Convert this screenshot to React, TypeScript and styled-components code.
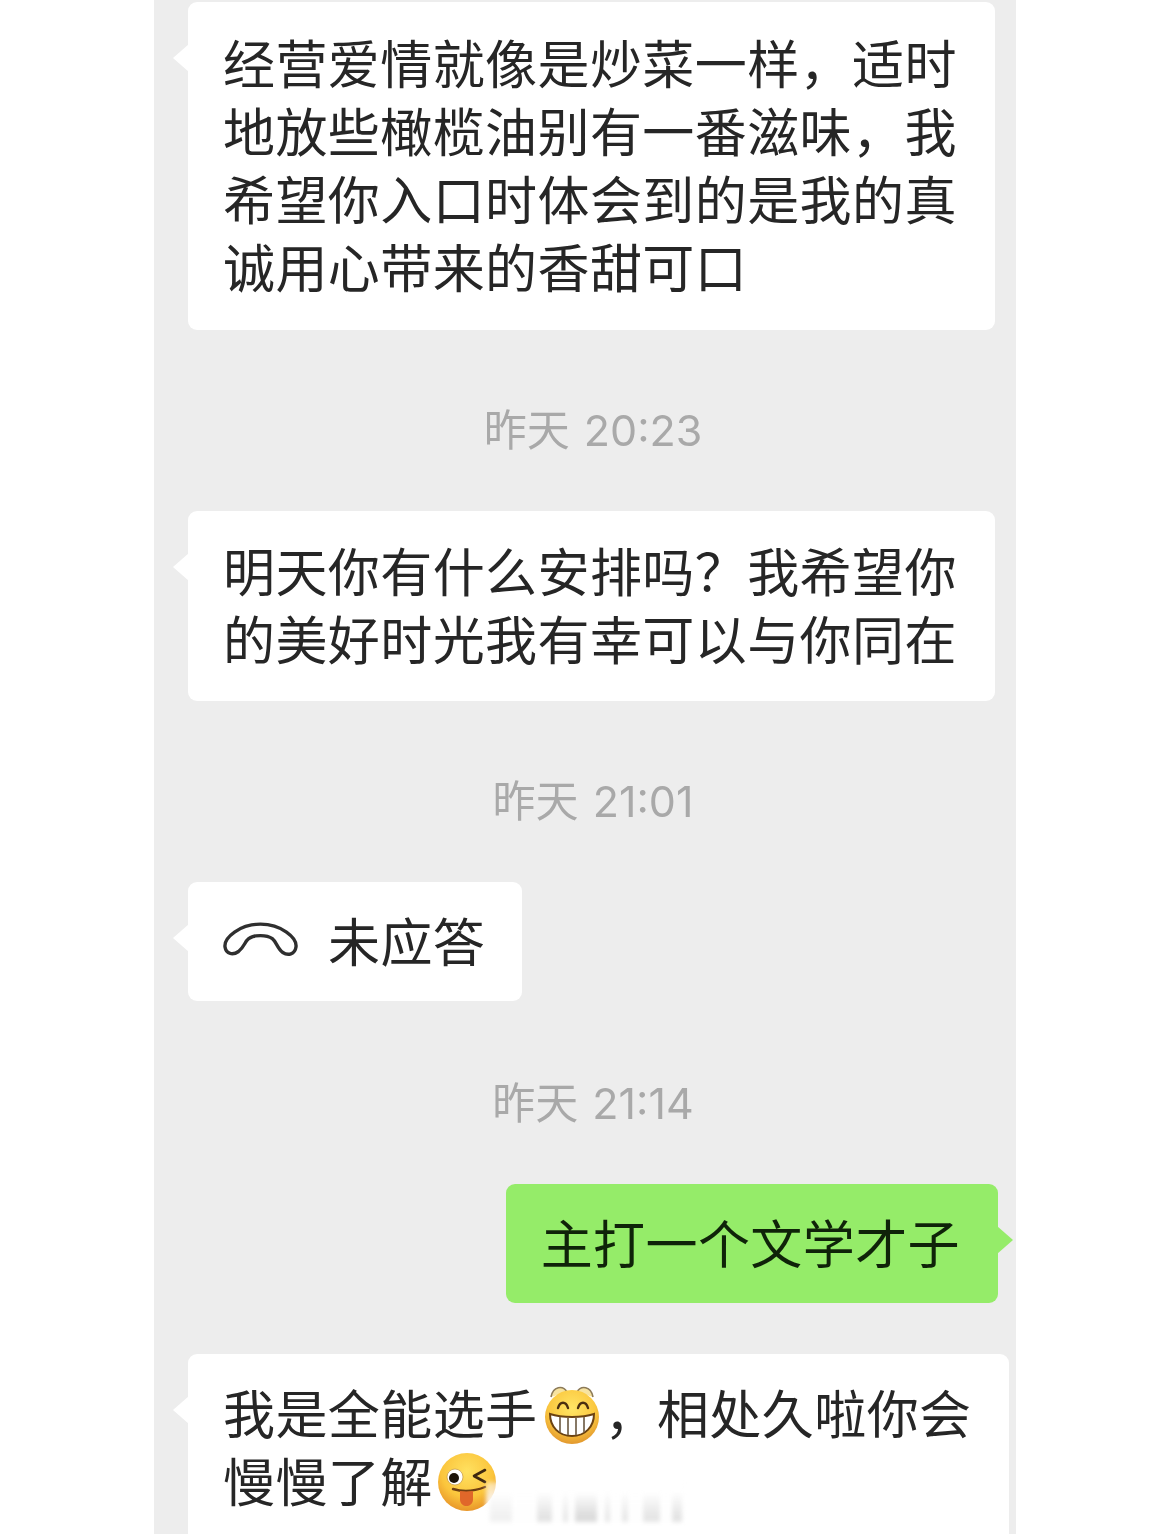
import React from "react"
import styled, { createGlobalStyle } from "styled-components"

const Global = createGlobalStyle`
  html, body {
    margin: 0;
    padding: 0;
    background: #ffffff;
  }
`

const Page = styled.main`
  width: 1170px;
  height: 1534px;
  overflow: hidden;
  background: #ffffff;
  font-family: "Noto Sans CJK SC", sans-serif;
`

const Chat = styled.div`
  position: relative;
  width: 862px;
  height: 1534px;
  margin-left: 154px;
  padding: 2px 18px 0 34px;
  box-sizing: border-box;
  background: #ededed;
  display: flex;
  flex-direction: column;
  align-items: flex-start;
  filter: blur(0.5px);
`

const Bubble = styled.div<{ $mine?: boolean; $top?: number; $bottom?: number; $right?: number }>`
  position: relative;
  flex-shrink: 0;
  align-self: ${(p) => (p.$mine ? "flex-end" : "flex-start")};
  padding: ${(p) => p.$top ?? 25}px ${(p) => p.$right ?? 38}px ${(p) => p.$bottom ?? 29}px 35px;
  border-radius: 9px;
  background: ${(p) => (p.$mine ? "#95ec69" : "#ffffff")};
  color: ${(p) => (p.$mine ? "#0f2309" : "#262626")};
  font-size: 52px;
  letter-spacing: 0.42px;
  line-height: 68px;
  white-space: nowrap;

  &::before {
    content: "";
    position: absolute;
    top: 42px;
    ${(p) => (p.$mine ? "right: -15px;" : "left: -15px;")}
    width: 16px;
    height: 28px;
    background: inherit;
    clip-path: ${(p) =>
      p.$mine ? "polygon(0 0, 100% 50%, 0 100%)" : "polygon(100% 0, 0 50%, 100% 100%)"};
  }
`

const Time = styled.div<{ $top?: number }>`
  align-self: center;
  margin: ${(p) => p.$top ?? 75}px 0 56px;
  color: #a9a9a9;
  font-family: Inter, "Noto Sans CJK SC", sans-serif;
  font-size: 43px;
  word-spacing: 2px;
  line-height: 50px;
  white-space: nowrap;
`

const CallRow = styled.div`
  display: flex;
  align-items: center;
  gap: 30px;
`

const LastBubble = styled(Bubble)`
  margin-top: 51px;
`

const InlineEmoji = styled.svg`
  display: inline-block;
  width: 60px;
  height: 60px;
  margin: 0 3px 0 4px;
  vertical-align: -10px;
`

const Watermark = styled.div`
  position: absolute;
  left: 332px;
  top: 1482px;
  width: 200px;
  height: 40px;
  display: flex;
  background: linear-gradient(180deg, rgba(255, 255, 255, 0.5), rgba(255, 255, 255, 0.92) 50%, #ffffff);
  filter: blur(2px);
`

const WatermarkBar = styled.span<{ $w: number; $gap: number; $shade: string }>`
  width: ${(p) => p.$w}px;
  margin-left: ${(p) => p.$gap}px;
  margin-top: 10px;
  background: linear-gradient(180deg, rgba(255, 255, 255, 0) 0%, ${(p) => p.$shade} 80%);
`

const watermarkBars = [
  { w: 22, gap: 4, shade: "#f1f1f1" },
  { w: 15, gap: 25, shade: "#e4e4e4" },
  { w: 5, gap: 11, shade: "#e8e8e8" },
  { w: 22, gap: 7, shade: "#dcdcdc" },
  { w: 5, gap: 8, shade: "#e8e8e8" },
  { w: 6, gap: 12, shade: "#e8e8e8" },
  { w: 17, gap: 15, shade: "#e6e6e6" },
  { w: 10, gap: 12, shade: "#e4e4e4" },
]

function PhoneIcon() {
  return (
    <svg width="75" height="36" viewBox="0 0 222 106" fill="none">
      <path
        d="M6 74C2 46 50 6 111 6C172 6 220 46 216 74C213 96 192 100 177 90C161 79 158 58 146 49C130 37 92 37 76 49C64 58 63 74 46 87C30 98 9 96 6 74Z"
        stroke="#2f2f2f"
        strokeWidth="10"
        strokeLinejoin="round"
      />
    </svg>
  )
}

function GrinEmoji() {
  return (
    <InlineEmoji viewBox="0 0 60 60">
      <defs>
        <radialGradient id="grinFace" cx="50%" cy="34%" r="66%">
          <stop offset="0%" stopColor="#ffe565" />
          <stop offset="65%" stopColor="#fbc840" />
          <stop offset="100%" stopColor="#e2982e" />
        </radialGradient>
      </defs>
      <path d="M9 13C11 2 21 1 25 8" fill="#f7e3a0" stroke="#8c7a58" strokeWidth="1.6" />
      <path d="M51 13C49 2 39 1 35 8" fill="#f7e3a0" stroke="#8c7a58" strokeWidth="1.6" />
      <circle cx="30" cy="33" r="27" fill="url(#grinFace)" />
      <path d="M16 24C18 17 24 17 26 24" fill="none" stroke="#4b2f10" strokeWidth="2.4" strokeLinecap="round" />
      <path d="M36 24C38 17 44 17 46 24" fill="none" stroke="#4b2f10" strokeWidth="2.4" strokeLinecap="round" />
      <path d="M8 30C20 34 40 34 52 30C52 43 43 52 30 52C17 52 8 43 8 30Z" fill="#ffffff" stroke="#6b4212" strokeWidth="2" />
      <path d="M18 33V48M26 34V51M34 34V51M42 33V48" stroke="#7a6a55" strokeWidth="1.8" />
    </InlineEmoji>
  )
}

function WinkEmoji() {
  return (
    <InlineEmoji viewBox="0 0 60 60">
      <defs>
        <radialGradient id="winkFace" cx="50%" cy="32%" r="68%">
          <stop offset="0%" stopColor="#ffe160" />
          <stop offset="65%" stopColor="#fbc53c" />
          <stop offset="100%" stopColor="#e8962a" />
        </radialGradient>
      </defs>
      <circle cx="30" cy="30" r="29" fill="url(#winkFace)" />
      <circle cx="18" cy="25" r="8" fill="#ffffff" stroke="#c9a04a" strokeWidth="0.8" />
      <circle cx="17" cy="26" r="5" fill="#1d1408" />
      <path d="M48 18L37 24L48 30" fill="none" stroke="#3e2810" strokeWidth="2.6" strokeLinecap="round" strokeLinejoin="round" />
      <path d="M16 37C26 40 38 39 48 35" fill="none" stroke="#6f3f12" strokeWidth="2.4" strokeLinecap="round" />
      <path d="M23 39C27 39.5 32 39.5 36 39L36 48C35 56 24 56 23 48Z" fill="#e0672a" />
    </InlineEmoji>
  )
}

export default function App() {
  return (
    <Page>
      <Global />
      <Chat>
        <Bubble $top={26} $bottom={30}>
          经营爱情就像是炒菜一样，适时<br />
          地放些橄榄油别有一番滋味，我<br />
          希望你入口时体会到的是我的真<br />
          诚用心带来的香甜可口
        </Bubble>
        <Time>昨天 20:23</Time>
        <Bubble>
          明天你有什么安排吗？我希望你<br />
          的美好时光我有幸可以与你同在
        </Bubble>
        <Time>昨天 21:01</Time>
        <Bubble $top={24} $bottom={27} $right={37}>
          <CallRow>
            <PhoneIcon />
            <span>未应答</span>
          </CallRow>
        </Bubble>
        <Time $top={77}>昨天 21:14</Time>
        <Bubble $mine $top={24} $bottom={27}>主打一个文学才子</Bubble>
        <LastBubble $top={24}>
          我是全能选手<GrinEmoji />，相处久啦你会<br />
          慢慢了解<WinkEmoji />
        </LastBubble>
        <Watermark>
          {watermarkBars.map((bar, i) => (
            <WatermarkBar key={i} $w={bar.w} $gap={bar.gap} $shade={bar.shade} />
          ))}
        </Watermark>
      </Chat>
    </Page>
  )
}
